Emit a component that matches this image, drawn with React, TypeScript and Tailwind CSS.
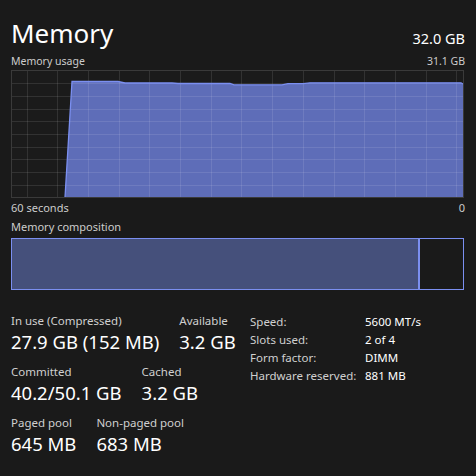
import React from 'react';

const W = 453;
const H = 128;

const usage: [number, number][] = [
  [65, 197.5], [72, 81.5], [118, 81.5], [125, 83], [172, 83], [178, 83.5], [230, 83.5],
  [234, 84.8], [282, 84.8], [288, 83.7], [303, 83.7], [310, 82.8], [461, 82.8], [463, 84],
];

const UsageChart: React.FC = () => {
  const pts = usage.map(([x, y]) => [x - 11, y - 70]);
  const line = pts.map(([x, y]) => `${x},${y}`).join(' ');
  const area = `${pts[0][0]},${H} ${line} ${W - 0.5},${H}`;
  const cols = Array.from({ length: 15 }, (_, i) => 15.5 + i * 30.7);
  const rows = Array.from({ length: 9 }, (_, i) => 13.2 + i * 12.7);

  return (
    <svg width={W} height={H} className="block">
      <rect x="0" y="0" width={W} height={H} fill="#1b1b1b" />
      <polygon points={area} fill="#5e6db8" />
      {cols.map((x) => (
        <line key={x} x1={Math.round(x) + 0.5} y1="0" x2={Math.round(x) + 0.5} y2={H} stroke="#ffffff" strokeOpacity="0.1" />
      ))}
      {rows.map((y) => (
        <line key={y} x1="0" y1={Math.round(y) + 0.5} x2={W} y2={Math.round(y) + 0.5} stroke="#ffffff" strokeOpacity="0.1" />
      ))}
      <polyline points={line} fill="none" stroke="#7b8ff0" strokeWidth="1.3" />
      <line x1="0" y1={H - 0.5} x2={W} y2={H - 0.5} stroke="#4a5280" />
      <rect x="0.5" y="0.5" width={W - 1} height={H - 1} fill="none" stroke="#3a3a3a" />
    </svg>
  );
};

const Stat: React.FC<{ label: string; value: string }> = ({ label, value }) => (
  <div className="flex flex-col">
    <span className="text-[11.5px] leading-[16px] text-[#d0d0d0]">{label}</span>
    <span className="text-[18.5px] leading-[26px] text-white whitespace-nowrap">{value}</span>
  </div>
);

const specs = [
  ['Speed:', '5600 MT/s'],
  ['Slots used:', '2 of 4'],
  ['Form factor:', 'DIMM'],
  ['Hardware reserved:', '881 MB'],
];

export default function App() {
  return (
    <div
      className="w-[476px] h-[476px] bg-[#1a1a1a] text-white px-[11px] overflow-hidden"
      style={{ fontFamily: '"Noto Sans", "Open Sans", sans-serif' }}
    >
      <div className="flex items-end justify-between pt-[16px]">
        <h1 className="text-[26px] leading-[34px] font-normal">Memory</h1>
        <span className="text-[14.5px] leading-[20px] mb-[2px]">32.0 GB</span>
      </div>

      <div className="flex justify-between text-[10.5px] leading-[14px] text-[#cccccc] mt-[4px]">
        <span>Memory usage</span>
        <span>31.1 GB</span>
      </div>
      <div className="mt-[2px]">
        <UsageChart />
      </div>
      <div className="flex justify-between text-[11px] leading-[14px] text-[#cccccc] mt-[3px]">
        <span>60 seconds</span>
        <span>0</span>
      </div>
      <div className="text-[11px] leading-[14px] text-[#cccccc] mt-[5px]">Memory composition</div>
      <div className="mt-[4px] flex h-[52px] w-[453px] border border-[#7b8ff0]">
        <div className="w-[408px] bg-[#45507b] border-r-2 border-[#7b8ff0]" />
        <div className="flex-1" />
      </div>

      <div className="flex mt-[23px]">
        <div className="w-[239px] flex flex-col gap-[9px]">
          <div className="flex gap-[20px]">
            <Stat label="In use (Compressed)" value="27.9 GB (152 MB)" />
            <Stat label="Available" value="3.2 GB" />
          </div>
          <div className="flex gap-[20px]">
            <Stat label="Committed" value="40.2/50.1 GB" />
            <Stat label="Cached" value="3.2 GB" />
          </div>
          <div className="flex gap-[20px]">
            <Stat label="Paged pool" value="645 MB" />
            <Stat label="Non-paged pool" value="683 MB" />
          </div>
        </div>
        <div className="flex flex-col">
          {specs.map(([k, v]) => (
            <div key={k} className="flex text-[11.5px] leading-[18px]">
              <span className="w-[115px] text-[#d0d0d0]">{k}</span>
              <span className="text-white">{v}</span>
            </div>
          ))}
        </div>
      </div>
    </div>
  );
}
